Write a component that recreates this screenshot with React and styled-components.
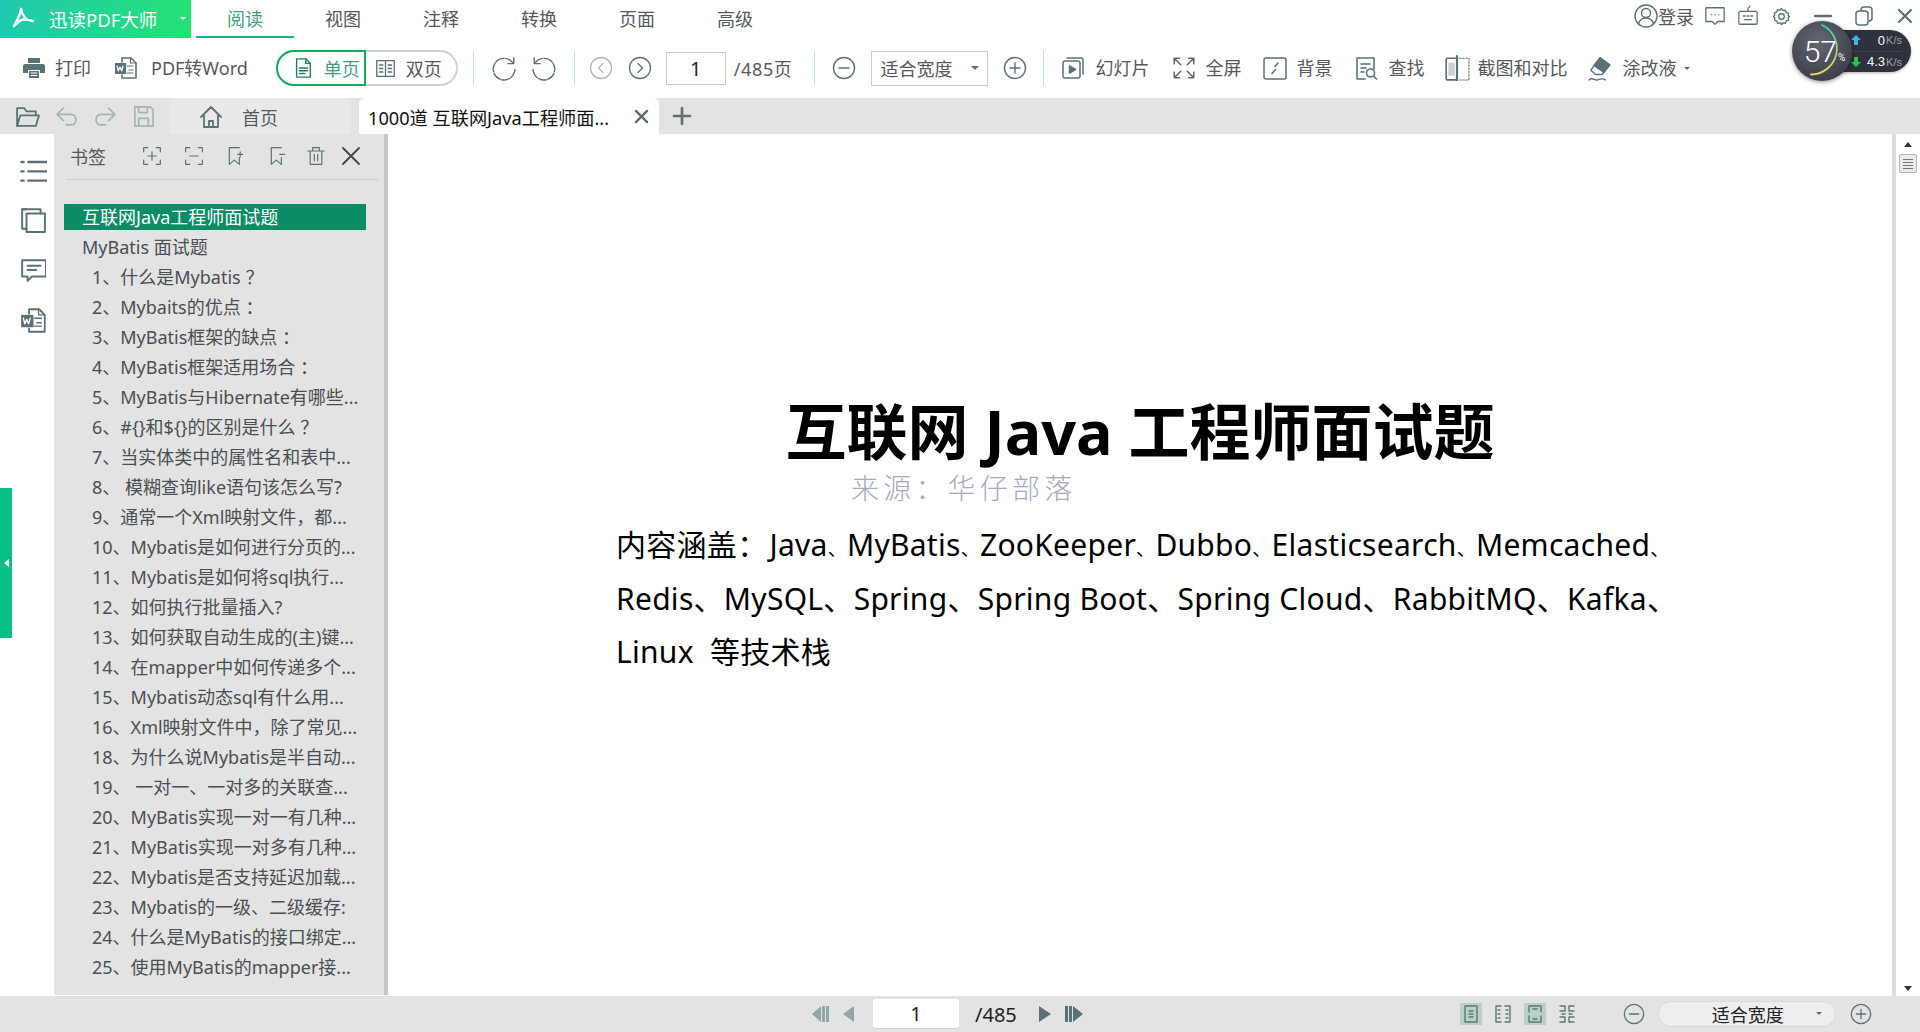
import React from 'react';
import styled, { createGlobalStyle } from 'styled-components';

const SANS = `"Noto Sans", "Noto Sans CJK SC", sans-serif`;
const ICON = '#5a7277';

const GlobalStyle = createGlobalStyle`
  html, body { margin: 0; padding: 0; background: #fff; }
  #root { height: 1032px; }
  * { box-sizing: border-box; }
`;

const Window = styled.div`
  position: relative;
  width: 1920px;
  height: 1032px;
  overflow: hidden;
  display: flex;
  flex-direction: column;
  font-family: ${SANS};
  color: #55595c;
`;

const TopBar = styled.div`
  height: 38px;
  display: flex;
  align-items: stretch;
  flex-shrink: 0;
`;

const Brand = styled.div`
  width: 191px;
  background: linear-gradient(90deg, #1fc9b0, #24e175);
  color: #fff;
  display: flex;
  align-items: center;
  padding-left: 11px;
  font-size: 18.5px;
  position: relative;
  svg { margin-right: 12px; }
`;

const Caret = styled.span`
  display: inline-block;
  width: 0;
  height: 0;
  border-left: ${p => p.$size || 4}px solid transparent;
  border-right: ${p => p.$size || 4}px solid transparent;
  border-top: ${p => p.$size || 4}px solid ${p => p.$color || ICON};
  margin-left: ${p => p.$ml || 0}px;
  flex-shrink: 0;
`;

const BrandCaret = styled(Caret)`
  position: absolute;
  right: 5px;
  top: 17px;
`;

const Tabs = styled.div`
  display: flex;
  padding-left: 5px;
`;

const Tab = styled.div`
  width: 98px;
  display: flex;
  align-items: center;
  justify-content: center;
  font-size: 18px;
  color: ${p => (p.$active ? '#3f9f7c' : '#55595c')};
  border-bottom: 2px solid ${p => (p.$active ? '#12b48c' : 'transparent')};
`;

const WinControls = styled.div`
  margin-left: auto;
  display: flex;
  align-items: center;
  padding-right: 7px;
  font-size: 18px;
  padding-bottom: 6px;
`;

const CtrlSlot = styled.span`
  display: flex;
  align-items: center;
  margin-left: ${p => p.$ml || 0}px;
`;

const Toolbar = styled.div`
  height: 60px;
  display: flex;
  align-items: center;
  flex-shrink: 0;
  padding-left: 22px;
  font-size: 18px;
`;

const ToolItem = styled.div`
  display: flex;
  align-items: center;
  gap: ${p => p.$gap || 9}px;
  margin-left: ${p => p.$ml || 0}px;
  white-space: nowrap;
  line-height: 24px;
`;

const ModeGroup = styled.div`
  margin-left: 28px;
  width: 182px;
  height: 36px;
  display: flex;
  border: 2px solid #cfd2d2;
  border-left: 0;
  border-radius: 18px;
`;

const ModeActive = styled.div`
  width: 90px;
  height: 36px;
  margin-top: -2px;
  border: 2px solid #17a85c;
  border-radius: 18px 0 0 18px;
  display: flex;
  align-items: center;
  padding-left: 14px;
  gap: 10px;
  color: #3f9f7c;
`;

const ModeOther = styled.div`
  display: flex;
  align-items: center;
  padding-left: 9px;
  gap: 10px;
`;

const Sep = styled.div`
  width: 1px;
  height: 34px;
  background: #bfe0d6;
  margin-left: ${p => p.$ml || 0}px;
`;

const PageInput = styled.div`
  width: 60px;
  height: 33px;
  border: 1px solid #ccc;
  margin-left: 14px;
  display: flex;
  align-items: center;
  justify-content: center;
  font-size: 20px;
  color: #222;
`;

const PageCount = styled.span`
  margin-left: 8px;
  letter-spacing: 0.6px;
  white-space: nowrap;
`;

const ZoomSelect = styled.div`
  width: 117px;
  height: 35px;
  border: 1px solid #ccc;
  margin-left: 15px;
  display: flex;
  align-items: center;
  padding-left: 8px;
  justify-content: space-between;
  padding-right: 8px;
`;

const TabStrip = styled.div`
  height: 36px;
  background: #e3e3e3;
  display: flex;
  align-items: center;
  flex-shrink: 0;
  padding-left: 15px;
`;

const StripIcons = styled.div`
  display: flex;
  align-items: center;
  gap: 14px;
`;

const HomeTab = styled.div`
  width: 180px;
  height: 36px;
  background: #e9e9e9;
  margin-left: 15px;
  display: flex;
  align-items: center;
  padding: 2px 0 0 29px;
  gap: 19px;
  font-size: 18px;
  border-radius: 6px 6px 0 0;
`;

const DocTab = styled.div`
  width: 300px;
  height: 36px;
  background: #fff;
  margin-left: 9px;
  display: flex;
  align-items: center;
  padding: 1px 10px 0 9px;
  font-size: 18.2px;
  color: #111;
  border-radius: 6px 6px 0 0;
  white-space: nowrap;
  justify-content: space-between;
`;

const AddTab = styled.div`
  margin-left: 13px;
  display: flex;
`;

const Body = styled.div`
  flex: 1;
  display: flex;
  min-height: 0;
`;

const Rail = styled.div`
  width: 54px;
  position: relative;
  display: flex;
  flex-direction: column;
  align-items: center;
  padding: 21px 0 0 12px;
  gap: 24px;
`;

const Handle = styled.div`
  position: absolute;
  left: 0;
  top: 354px;
  width: 12px;
  height: 150px;
  background: #0abf85;
  display: flex;
  align-items: center;
  justify-content: center;
`;

const HandleArrow = styled.span`
  width: 0;
  height: 0;
  border-top: 4px solid transparent;
  border-bottom: 4px solid transparent;
  border-right: 5px solid #fff;
`;

const Panel = styled.aside`
  width: 334px;
  background: #e3e3e3;
  border-right: 4px solid #c6c6c6;
  padding: 0 0 0 10px;
  margin-bottom: 1px;
  flex-shrink: 0;
`;

const PanelHead = styled.div`
  height: 46px;
  margin: 0 6px 0 2px;
  border-bottom: 1px solid #cdcdcd;
  display: flex;
  align-items: center;
  font-size: 18px;
  padding-left: 4px;
  padding-bottom: 2px;
`;

const HeadIcons = styled.div`
  display: flex;
  align-items: center;
  margin-left: 36px;
  gap: 22px;
`;

const BookmarkList = styled.ul`
  list-style: none;
  margin: 24px 0 0 0;
  padding: 0;
  width: 302px;
`;

const Bookmark = styled.li`
  height: ${p => (p.$selected ? '26px' : '30px')};
  margin-bottom: ${p => (p.$selected ? '2px' : 0)};
  line-height: ${p => (p.$selected ? '26px' : '30px')};
  font-size: 18px;
  white-space: nowrap;
  padding-left: ${p => (p.$level === 2 ? 28 : 18)}px;
  background: ${p => (p.$selected ? '#0c8c66' : 'transparent')};
  color: ${p => (p.$selected ? '#fff' : '#4a4f52')};
`;

const DocArea = styled.main`
  flex: 1;
  min-width: 0;
  background: #fff;
  border-right: 4px solid #dcdcdc;
  padding-top: 262px;
  color: #000;
`;

const DocTitle = styled.h1`
  margin: 0;
  text-align: center;
  font-size: 61px;
  line-height: 72px;
  font-weight: 700;
  white-space: nowrap;
`;

const DocSource = styled.div`
  margin: 2px 0 0 463px;
  font-size: 28px;
  line-height: 36px;
  letter-spacing: 4.2px;
  font-weight: 300;
  color: #a3abc4;
`;

const DocLines = styled.div`
  margin: 12px 0 0 228px;
  font-size: 30px;
  line-height: 53.5px;
`;

const DocLine = styled.div`
  height: 53.5px;
  white-space: nowrap;
  letter-spacing: 0.28px;
`;

const Colon = styled.span`
  margin-right: 2px;
`;

const Pause = styled.span`
  font-size: ${p => p.$size}px;
  line-height: 1;
`;

const ScrollTrack = styled.div`
  width: 24px;
  background: #fff;
  display: flex;
  flex-direction: column;
  align-items: center;
  padding-top: 8px;
  justify-content: flex-start;
  position: relative;
`;

const ScrollArrow = styled.span`
  width: 0;
  height: 0;
  border-left: 4px solid transparent;
  border-right: 4px solid transparent;
  ${p => (p.$down ? 'border-top: 5px solid #333;' : 'border-bottom: 5px solid #333;')}
  ${p => p.$down && 'position: absolute; bottom: 5px;'}
`;

const ScrollThumb = styled.div`
  margin-top: 7px;
  width: 18px;
  height: 19px;
  background: #ececec;
  border: 1px solid #b5b5b5;
  border-radius: 2px;
  display: flex;
  flex-direction: column;
  justify-content: center;
  align-items: center;
  gap: 2px;
  i { display: block; width: 10px; height: 1px; background: #777; }
`;

const StatusBar = styled.footer`
  height: 36px;
  background: #e3e3e3;
  flex-shrink: 0;
  display: flex;
  align-items: center;
  padding-left: 811px;
  font-size: 18px;
  color: #222;
`;

const StatusPage = styled.div`
  width: 86px;
  height: 30px;
  background: #fff;
  border-radius: 3px;
  border-bottom: 1px solid #d0d0d0;
  margin-left: 18px;
  font-size: 20px;
  display: flex;
  align-items: center;
  justify-content: center;
`;

const StatusTotal = styled.span`
  margin-left: 16px;
  margin-right: 20px;
  font-size: 20px;
`;

const ViewButton = styled.div`
  width: 22px;
  height: 22px;
  margin-left: ${p => p.$ml || 10}px;
  background: ${p => (p.$on ? '#b9cfc7' : 'transparent')};
  display: flex;
  align-items: center;
  justify-content: center;
`;

const StatusSelect = styled.div`
  width: 178px;
  height: 26px;
  border-radius: 13px;
  background: #eeeeee;
  border: 1px solid #dadada;
  margin: 0 14px 0 13px;
  display: flex;
  align-items: center;
  position: relative;
  justify-content: center;
  padding-left: 2px;
`;

const StatusCaret = styled(Caret)`
  position: absolute;
  right: 13px;
  top: 10px;
`;

const Meter = styled.div`
  position: absolute;
  left: 1792px;
  top: 21px;
  width: 119px;
  height: 60px;
`;

const MeterPill = styled.div`
  position: absolute;
  left: 30px;
  top: 9px;
  width: 89px;
  height: 42px;
  border-radius: 0 21px 21px 0;
  background: #2e323c;
  box-shadow: 0 1px 3px rgba(0, 0, 0, 0.3);
  display: flex;
  flex-direction: column;
  font-size: 13px;
  color: #fff;
  padding: 0 9px 0 30px;
  font-family: "Liberation Sans", sans-serif;
`;

const MeterRow = styled.div`
  flex: 1;
  display: flex;
  align-items: center;
  justify-content: flex-end;
  position: relative;
  &:first-child { border-bottom: 1px solid #3d424c; }
  small { font-size: 11px; color: #9aa0a8; margin-left: 1px; }
  svg { position: absolute; left: -1px; top: 5px; }
`;

const MeterDial = styled.div`
  position: absolute;
  left: 0;
  top: 0;
  width: 60px;
  height: 60px;
  border-radius: 50%;
  background: radial-gradient(circle at 45% 35%, #646873, #3d404b 75%);
  box-shadow: 0 1px 4px rgba(0, 0, 0, 0.45);
  color: #fff;
  display: flex;
  align-items: center;
  justify-content: center;
  padding-left: 5px;
  font-family: "Roboto", sans-serif;
  font-weight: 300;
  font-size: 30px;
  svg { position: absolute; left: 0; top: 0; }
  small { font-size: 10px; margin-top: 12px; margin-left: 1px; font-weight: 400; }
`;

const Svg = ({ size = 24, w, h, vb, fill = 'none', stroke = ICON, sw = 1.6, children, opacity }) => (
  <svg
    width={w || size}
    height={h || size}
    viewBox={vb || '0 0 24 24'}
    fill={fill}
    stroke={stroke}
    strokeWidth={sw}
    strokeLinecap="round"
    strokeLinejoin="round"
    opacity={opacity}
  >
    {children}
  </svg>
);

const WordIcon = ({ size = 24 }) => (
  <Svg size={size}>
    <path d="M8 6V2h9l5 5v15H8v-3" />
    <path d="M16.500 2v5H22M13 10h6M15 14h4M13 17h6" strokeWidth="1.2" />
    <rect x="1" y="7" width="11" height="11" fill={ICON} stroke="none" />
    <path d="M3 10l1.300 5 1.700-4 1.700 4L9 10" stroke="#fff" strokeWidth="1.200" />
  </Svg>
);

const CircleNav = ({ dir, faded }) => (
  <Svg size={24} stroke={faded ? '#a9b9bb' : ICON} sw={1.3}>
    <circle cx="12" cy="12" r="10.500" />
    <path d={dir === 'left' ? 'M14 7.500L9.500 12l4.500 4.500' : 'M10 7.500l4.500 4.500-4.500 4.500'} />
  </Svg>
);

const CircleMath = ({ plus, size = 24 }) => (
  <Svg size={size} sw={1.4}>
    <circle cx="12" cy="12" r="10.500" />
    <path d="M7 12h10" />
    {plus && <path d="M12 7v10" />}
  </Svg>
);

const ViewIcon = ({ kind }) => (
  <Svg size={20} vb="0 0 20 20" sw={1.4} stroke="#5f7679">
    {kind === 0 && (<><rect x="4" y="2" width="12" height="16" /><path d="M8 7h4M8 10h4M8 13h4" /></>)}
    {kind === 1 && (<path d="M8 2H3v16h5M12 2h5v16h-5M5 6h2M5 10h2M5 14h2M13 6h2M13 10h2M13 14h2" />)}
    {kind === 2 && (<><path d="M4 8V2h12v6M4 12v6h12v-6" /><path d="M8 5h4M8 15h4" /></>)}
    {kind === 3 && (<path d="M8 2H3M8 7H3M8 13H3M8 18H3M12 2h5M12 7h5M12 13h5M12 18h5M8 2v5M12 2v5M8 13v5M12 13v5M5 10h3M12 10h3" />)}
  </Svg>
);

const BOOKMARKS = [
  '1、什么是Mybatis ？',
  '2、Mybaits的优点 ：',
  '3、MyBatis框架的缺点 ：',
  '4、MyBatis框架适用场合 ：',
  '5、MyBatis与Hibernate有哪些...',
  '6、#{}和${}的区别是什么 ？',
  '7、当实体类中的属性名和表中...',
  '8、 模糊查询like语句该怎么写?',
  '9、通常一个Xml映射文件，都...',
  '10、Mybatis是如何进行分页的...',
  '11、Mybatis是如何将sql执行...',
  '12、如何执行批量插入?',
  '13、如何获取自动生成的(主)键...',
  '14、在mapper中如何传递多个...',
  '15、Mybatis动态sql有什么用...',
  '16、Xml映射文件中，除了常见...',
  '18、为什么说Mybatis是半自动...',
  '19、 一对一、一对多的关联查...',
  '20、MyBatis实现一对一有几种...',
  '21、MyBatis实现一对多有几种...',
  '22、Mybatis是否支持延迟加载...',
  '23、Mybatis的一级、二级缓存:',
  '24、什么是MyBatis的接口绑定...',
  '25、使用MyBatis的mapper接...',
];

const TECH_FIRST = ['Java', 'MyBatis', 'ZooKeeper', 'Dubbo', 'Elasticsearch', 'Memcached'];
const TECH_SECOND = ['Redis', 'MySQL', 'Spring', 'Spring Boot', 'Spring Cloud', 'RabbitMQ', 'Kafka'];

function App() {
  return (
    <Window>
      <GlobalStyle />
      <TopBar>
        <Brand>
          <Svg w={26} h={24} vb="0 0 26 24" stroke="#fff" sw={2.4}>
            <path d="M10 2C9 8 6 14 3 19" />
            <path d="M3 19c4-4 6-6 9-6.500 3-.2 7 .7 10 1.500" />
            <path d="M10 2c1 4 3 8 6 10.500" />
          </Svg>
          迅读PDF大师
          <BrandCaret $color="#fff" $size={3} />
        </Brand>
        <Tabs>
          <Tab $active>阅读</Tab>
          <Tab>视图</Tab>
          <Tab>注释</Tab>
          <Tab>转换</Tab>
          <Tab>页面</Tab>
          <Tab>高级</Tab>
        </Tabs>
        <WinControls>
          <CtrlSlot>
            <Svg size={24} sw={1.4}>
              <circle cx="12" cy="12" r="11" />
              <circle cx="12" cy="9" r="4.500" />
              <path d="M4.500 20c1-4 4-6 7.500-6s6.500 2 7.500 6" />
            </Svg>
          </CtrlSlot>
          <span>登录</span>
          <CtrlSlot $ml={10}>
            <Svg size={22} sw={1.4}>
              <path d="M2 3h20v15h-7l-3 3-3-3H2z" />
              <path d="M8 10.500h.1M12 10.500h.1M16 10.500h.1" />
            </Svg>
          </CtrlSlot>
          <CtrlSlot $ml={11}>
            <Svg size={22} sw={1.4}>
              <rect x="2" y="7" width="20" height="14" rx="1.500" />
              <path d="M12 7V4c0-1.500 2-1 2-3M7 12h2M11 12h2M15 12h2M8 16h8" />
            </Svg>
          </CtrlSlot>
          <CtrlSlot $ml={13}>
            <Svg size={19} sw={1.700}>
              <path d="M12 2l2 2.500 3-.5 1 3 3 1-.5 3L22 12l-1.500 1.500.5 3-3 1-1 3-3-.5-2 2-2-2-3 .5-1-3-3-1 .5-3L2 12l1.500-1.500-.5-3 3-1 1-3 3 .5z" />
              <circle cx="12" cy="12" r="3.500" />
            </Svg>
          </CtrlSlot>
          <CtrlSlot $ml={23}>
            <Svg w={18} h={4} vb="0 0 18 4" sw={2.500}><path d="M1 2h16" /></Svg>
          </CtrlSlot>
          <CtrlSlot $ml={23}>
            <Svg w={18} h={20} vb="0 0 18 20" sw={1.500}>
              <rect x="1" y="5" width="12" height="14" rx="3" />
              <path d="M6 4c0-1.500 1-3 3-3h5c2 0 3 1.500 3 3v8c0 2-1 3-3 3" />
            </Svg>
          </CtrlSlot>
          <CtrlSlot $ml={24}>
            <Svg size={16} vb="0 0 16 16" sw={2.200}><path d="M2 2l12 12M14 2L2 14" /></Svg>
          </CtrlSlot>
        </WinControls>
      </TopBar>

      <Toolbar>
        <ToolItem>
          <Svg size={24} fill={ICON} stroke="none">
            <path d="M6 2h12v5H6zM3 8h18c1 0 2 1 2 2v7h-5v-3H6v3H1v-7c0-1 1-2 2-2zM7 15h10v7H7z" />
            <path d="M9 17h6M9 19.500h6" stroke="#fff" strokeWidth="1" />
          </Svg>
          打印
        </ToolItem>
        <ToolItem $ml={23} $gap={13}>
          <WordIcon />
          PDF转Word
        </ToolItem>
        <ModeGroup>
          <ModeActive>
            <Svg size={22} stroke="#1e7f64" sw={1.500}>
              <path d="M5 2h10l5 5v15H5z" />
              <path d="M15 2v5h5M8 12h9M8 15h9M8 18h6" />
            </Svg>
            单页
          </ModeActive>
          <ModeOther>
            <Svg size={21} sw={1.500}>
              <rect x="2" y="3" width="20" height="18" />
              <path d="M12 3v18M5 8h4M5 12h4M5 16h4M15 8h4M15 12h4M15 16h4" />
            </Svg>
            双页
          </ModeOther>
        </ModeGroup>
        <Sep $ml={15} />
        <ToolItem $ml={17}>
          <Svg size={26} sw={1.300}>
            <path d="M20 7A10 10 0 1 0 22 12" strokeDasharray="8 1.500" />
            <path d="M21 2.500V8h-5.500" />
          </Svg>
        </ToolItem>
        <ToolItem $ml={14}>
          <Svg size={26} sw={1.300}>
            <path d="M4 7A10 10 0 1 1 2 12" strokeDasharray="8 1.500" />
            <path d="M3 2.500V8h5.500" />
          </Svg>
        </ToolItem>
        <Sep $ml={17} />
        <ToolItem $ml={14}><CircleNav dir="left" faded /></ToolItem>
        <ToolItem $ml={15}><CircleNav dir="right" /></ToolItem>
        <PageInput>1</PageInput>
        <PageCount>/485页</PageCount>
        <Sep $ml={22} />
        <ToolItem $ml={17}><CircleMath /></ToolItem>
        <ZoomSelect>
          适合宽度
          <Caret $size={4} />
        </ZoomSelect>
        <ToolItem $ml={15}><CircleMath plus /></ToolItem>
        <Sep $ml={16} />
        <ToolItem $ml={17} $gap={10}>
          <Svg size={24} sw={1.500}>
            <rect x="2" y="5" width="17" height="17" rx="2" />
            <path d="M6 2h14c1 0 2 1 2 2v14" />
            <path d="M8.500 10l6 3.500-6 3.500z" fill={ICON} />
          </Svg>
          幻灯片
        </ToolItem>
        <ToolItem $ml={22} $gap={8}>
          <Svg size={26} sw={1.500}>
            <path d="M3 8V3h5M3 3l6 6M16 3h5v5M21 3l-6 6M3 16v5h5M3 21l6-6M21 16v5h-5M21 21l-6-6" />
          </Svg>
          全屏
        </ToolItem>
        <ToolItem $ml={22} $gap={9}>
          <Svg size={24} sw={1.500}>
            <rect x="1" y="2" width="22" height="21" rx="2" />
            <path d="M15 7l-3 3.500M12.500 13.500L9 17.500" />
          </Svg>
          背景
        </ToolItem>
        <ToolItem $ml={22} $gap={10}>
          <Svg size={24} sw={1.600}>
            <path d="M11 23H3V2h17v11" />
            <path d="M7 8h9M7 12h5M7 16h3" />
            <circle cx="16.500" cy="17" r="4" />
            <path d="M19.500 20l3 3" />
          </Svg>
          查找
        </ToolItem>
        <ToolItem $ml={20} $gap={7}>
          <Svg size={26} sw={1.500}>
            <rect x="2" y="3" width="10" height="20" rx="1" />
            <rect x="4" y="7" width="6" height="12" fill="#c9d2d3" stroke="none" />
            <path d="M12 1v24" strokeWidth="2" />
            <path d="M14 3h9v20h-9" strokeDasharray="1.500 1.500" strokeWidth="1" />
          </Svg>
          截图和对比
        </ToolItem>
        <ToolItem $ml={20} $gap={9}>
          <Svg size={26} sw={1.300}>
            <path d="M12 2.500l9 6.500-7 9H8L3.500 14z" />
            <path d="M12 2.500l9 6.500-5.500 7.200-9-6.500z" fill={ICON} />
            <path d="M2 23c3-3 5 1 8 0s4-2 7 0" />
          </Svg>
          涂改液
          <Caret $size={3} $ml={-1} />
        </ToolItem>
      </Toolbar>

      <TabStrip>
        <StripIcons>
          <Svg size={25} sw={1.700}>
            <path d="M2 21V4h7l2 3h9v4" />
            <path d="M2 21l3-10h18l-3 10z" />
          </Svg>
          <Svg size={25} stroke="#a6b4b6" sw={1.700}>
            <path d="M9 4L3 10l6 6M3 10h13c3 0 5 2 5 5s-2 5-5 5h-4" />
          </Svg>
          <Svg size={25} stroke="#a6b4b6" sw={1.700}>
            <path d="M15 4l6 6-6 6M21 10H8c-3 0-5 2-5 5s2 5 5 5h4" />
          </Svg>
          <Svg size={23} stroke="#a6b4b6" sw={1.700}>
            <path d="M3 2h16l3 3v17H3zM7 2v6h9V2M7 22v-8h10v8" />
          </Svg>
        </StripIcons>
        <HomeTab>
          <Svg size={24} sw={1.800}>
            <path d="M2 12L12 2l10 10M5 10v12h14V10M10 22v-6h4v6" />
          </Svg>
          首页
        </HomeTab>
        <DocTab>
          1000道 互联网Java工程师面...
          <Svg size={15} vb="0 0 16 16" stroke="#5d6b6e" sw={2.400}><path d="M2 2l12 12M14 2L2 14" /></Svg>
        </DocTab>
        <AddTab>
          <Svg size={20} vb="0 0 20 20" sw={2.600} stroke="#5a7277"><path d="M10 2v16M2 10h16" /></Svg>
        </AddTab>
      </TabStrip>

      <Body>
        <Rail>
          <Svg size={28} sw={2}>
            <path d="M8 6h18M8 14h18M8 22h18M2 6h2M2 14h2M2 22h2" />
          </Svg>
          <Svg size={26} sw={1.800}>
            <path d="M6 2H2v18h4" />
            <path d="M2 2h17v4" />
            <rect x="6" y="6" width="17" height="17" />
          </Svg>
          <Svg size={26} sw={1.800}>
            <path d="M2 3h22v15h-13l-4 4v-4H2z" />
            <path d="M7 8h12M7 12h8" />
          </Svg>
          <WordIcon size={27} />
          <Handle><HandleArrow /></Handle>
        </Rail>

        <Panel>
          <PanelHead>
            书签
            <HeadIcons>
              <Svg size={20} sw={1.400}>
                <path d="M2 7V2h5M17 2h5v5M2 17v5h5M17 22h5v-5M7 12h10M12 7v10" />
              </Svg>
              <Svg size={20} sw={1.400}>
                <path d="M2 7V2h5M17 2h5v5M2 17v5h5M17 22h5v-5M7 12h10" />
              </Svg>
              <Svg size={20} sw={1.400}>
                <path d="M16 2H4v20l6-5 6 5v-8M17 7v6M14 10h6" />
              </Svg>
              <Svg size={20} sw={1.400}>
                <path d="M16 2H4v20l6-5 6 5v-8M14 10h6" />
              </Svg>
              <CtrlSlot $ml={-4}>
                <Svg size={20} sw={1.400}>
                  <path d="M2 6h20M8 6V2h8v4M5 6v16h14V6M10 10v8M14 10v8" />
                </Svg>
              </CtrlSlot>
            </HeadIcons>
            <CtrlSlot $ml={15}>
              <Svg size={20} vb="0 0 20 20" sw={1.800} stroke="#444"><path d="M2 2l16 16M18 2L2 18" /></Svg>
            </CtrlSlot>
          </PanelHead>
          <BookmarkList>
            <Bookmark $selected>互联网Java工程师面试题</Bookmark>
            <Bookmark>MyBatis 面试题</Bookmark>
            {BOOKMARKS.map(title => (
              <Bookmark key={title} $level={2}>{title}</Bookmark>
            ))}
          </BookmarkList>
        </Panel>

        <DocArea>
          <DocTitle>互联网 Java 工程师面试题</DocTitle>
          <DocSource>来源：华仔部落</DocSource>
          <DocLines>
            <DocLine>
              内容涵盖<Colon>：</Colon>
              {TECH_FIRST.map(name => (
                <React.Fragment key={name}>{name}<Pause $size={19}>、</Pause></React.Fragment>
              ))}
            </DocLine>
            <DocLine>
              {TECH_SECOND.map(name => (
                <React.Fragment key={name}>{name}<Pause $size={30}>、</Pause></React.Fragment>
              ))}
            </DocLine>
            <DocLine>Linux&nbsp; 等技术栈</DocLine>
          </DocLines>
        </DocArea>

        <ScrollTrack>
          <ScrollArrow />
          <ScrollThumb><i /><i /><i /><i /></ScrollThumb>
          <ScrollArrow $down />
        </ScrollTrack>
      </Body>

      <StatusBar>
        <Svg w={20} h={18} vb="0 0 20 18" fill="#93a5a7" stroke="none">
          <path d="M10 1v16L1 9zM11 1h3v16h-3zM15 1h3v16h-3z" />
        </Svg>
        <CtrlSlot $ml={10}>
          <Svg w={14} h={18} vb="0 0 14 18" fill="#93a5a7" stroke="none"><path d="M13 1v16L2 9z" /></Svg>
        </CtrlSlot>
        <StatusPage>1</StatusPage>
        <StatusTotal>/485</StatusTotal>
        <Svg w={16} h={18} vb="0 0 16 18" fill={ICON} stroke="none"><path d="M2 1v16l12-8z" /></Svg>
        <CtrlSlot $ml={11}>
          <Svg w={20} h={18} vb="0 0 20 18" fill={ICON} stroke="none">
            <path d="M1 1h3v16H1zM5 1h3v16H5zM9 1v16l10-8z" />
          </Svg>
        </CtrlSlot>
        <ViewButton $on $ml={376}><ViewIcon kind={0} /></ViewButton>
        <ViewButton><ViewIcon kind={1} /></ViewButton>
        <ViewButton $on><ViewIcon kind={2} /></ViewButton>
        <ViewButton><ViewIcon kind={3} /></ViewButton>
        <CtrlSlot $ml={45}><CircleMath size={22} /></CtrlSlot>
        <StatusSelect>
          适合宽度
          <StatusCaret $size={3} />
        </StatusSelect>
        <CircleMath plus size={22} />
      </StatusBar>

      <Meter>
        <MeterPill>
          <MeterRow>
            <svg width="10" height="10" viewBox="0 0 10 10" fill="#3db4f0"><path d="M5 0l5 5H7v5H3V5H0z" /></svg>
            0<small>K/s</small>
          </MeterRow>
          <MeterRow>
            <svg width="10" height="10" viewBox="0 0 10 10" fill="#2fc24a"><path d="M5 10L0 5h3V0h4v5h3z" /></svg>
            4.3<small>K/s</small>
          </MeterRow>
        </MeterPill>
        <MeterDial>
          <svg width="60" height="60" viewBox="0 0 60 60" fill="none" strokeWidth="1.800" strokeLinecap="round">
            <defs>
              <linearGradient id="ring" x1="0.500" y1="0" x2="0.500" y2="1">
                <stop offset="0" stopColor="#2fd6b4" />
                <stop offset="1" stopColor="#f0dc50" />
              </linearGradient>
            </defs>
            <path d="M30 4A26 26 0 0 1 19 53.500" stroke="url(#ring)" />
          </svg>
          57<small>%</small>
        </MeterDial>
      </Meter>
    </Window>
  );
}

export default App;
